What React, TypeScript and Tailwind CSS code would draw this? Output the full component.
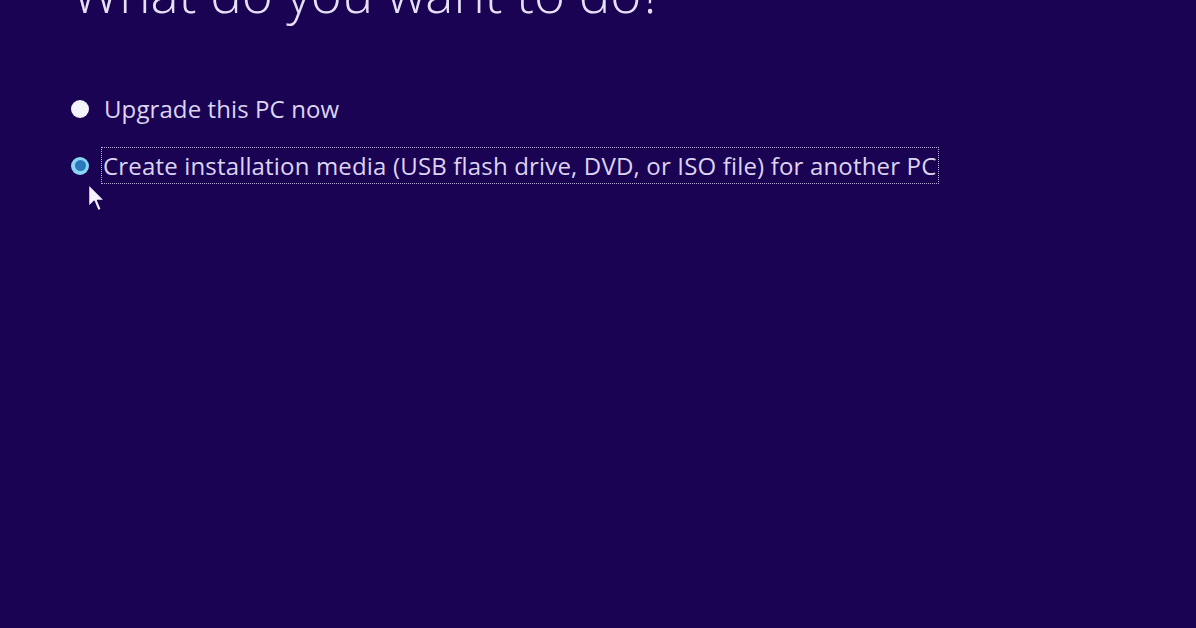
export default function App() {
  return (
    <div className="relative h-[628px] w-[1196px] overflow-hidden bg-[#1b0354] font-['Open_Sans',sans-serif] text-[#dcd4f0]">
      <h1 className="ml-[72px] mt-[-39px] text-[53px] font-light leading-[64px] text-[#e6e0f6]">
        What do you want to do?
      </h1>
      <div className="ml-[71px] mt-[66px] flex flex-col gap-[20px]">
        <div className="flex items-center gap-[13px]">
          <span className="h-[18px] w-[18px] rounded-full bg-[#f4f2fb]" />
          <span className="px-[2px] text-[24px] leading-[36px] tracking-[0.1px]">Upgrade this PC now</span>
        </div>
        <div className="flex items-center gap-[12px]">
          <span className="flex h-[18px] w-[18px] items-center justify-center rounded-full bg-[#8ad4f6]">
            <span className="h-[11px] w-[11px] rounded-full bg-[#2b78bc]" />
          </span>
          <span className="border border-dotted border-[#b8aedc] px-[1px] text-[24px] leading-[35px] tracking-[0.17px]">
            Create installation media (USB flash drive, DVD, or ISO file) for another PC
          </span>
        </div>
      </div>
      <svg className="absolute left-[87px] top-[183px]" width="19" height="30" viewBox="0 0 12 19">
        <path d="M1 1 L1 15 L4.5 11.5 L7 17.5 L9 16.7 L6.6 11 L11 11 Z" fill="#f4f2fb" stroke="#1b0354" strokeWidth="0.8" strokeLinejoin="round" />
      </svg>
    </div>
  );
}
